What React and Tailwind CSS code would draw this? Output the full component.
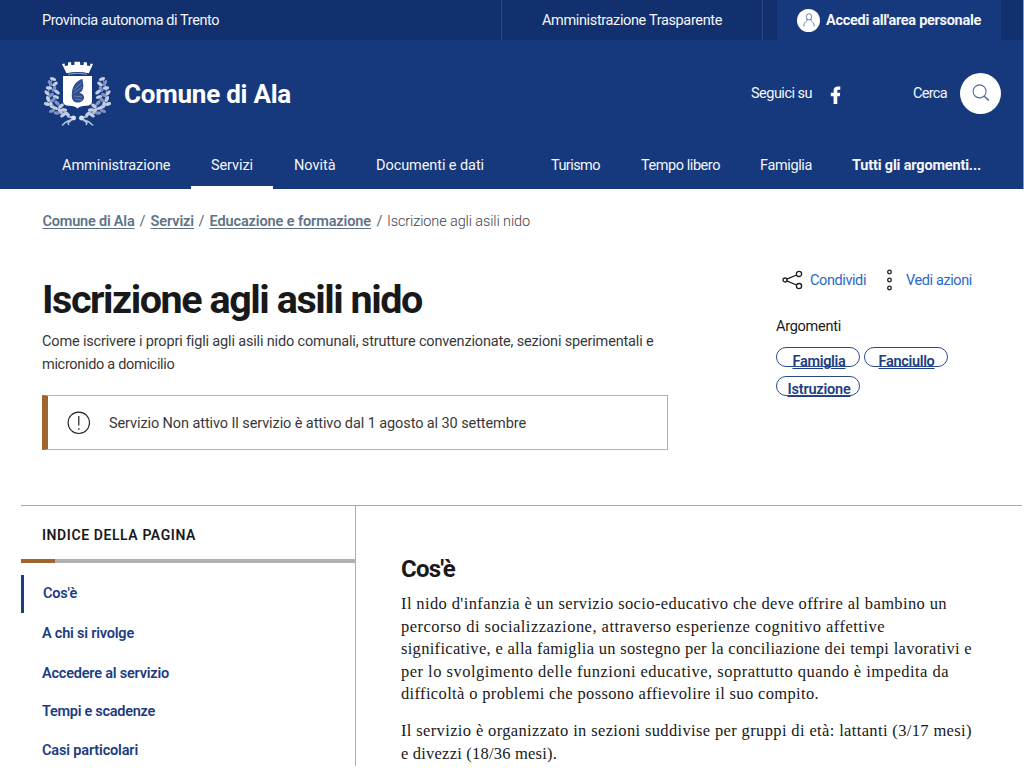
import React from "react";

const LEAVES = [
  [23, 28, 20], [20, 32, 60], [25, 33, -40], [19, 37, 10], [24, 38, -60], [27, 41, 40],
  [17, 42, 50], [21, 44, -30], [26, 46, 20], [18, 48, 70], [23, 49, -50], [17, 53, 15],
  [21, 54, 80], [27, 52, 45], [31, 55, -35], [25, 57, 20], [22, 60, -20], [30, 60, 60],
  [34, 59, 10], [27, 62, 0], [33, 64, -40], [37, 63, 35],
];

function Branch() {
  return (
    <g>
      <path d="M22 29 C14 45 20 59 45 67" fill="none" stroke="#b9c5e0" strokeWidth="0.8" />
      {LEAVES.map(([x, y, a], i) => (
        <ellipse key={i} cx={x} cy={y} rx="3.2" ry="1.7" transform={`rotate(${a} ${x} ${y})`} fill={i % 3 === 1 ? "#7f94c3" : "#c3cee4"} />
      ))}
      <path d="M46 67.5 L37 65.5 M44 67.5 L36 71 L32 74.5 M43 68 L38 72 L39 74" fill="none" stroke="#b5c2de" strokeWidth="1.5" />
    </g>
  );
}

function Crest() {
  return (
    <svg className="h-[85px] w-[100px] shrink-0" viewBox="0 0 100 85">
      <Branch />
      <g transform="translate(95 0) scale(-1 1)"><Branch /></g>
      <circle cx="43.5" cy="67" r="2.4" fill="#d9e0ef" />
      <circle cx="51.5" cy="67" r="2.4" fill="#d9e0ef" />
      <path d="M32 13 L34.5 12.6 L35 15 L38 14.5 L38 11.5 L41 11 L41.3 14 L44.3 14 L44.5 10.7 L50 10.7 L50.3 14 L53.5 14 L53.8 11 L57 11.5 L57 14.5 L60 15 L60.5 12.6 L63 13 L58.8 22.3 Q47.5 19.8 36.5 22.3 Z" fill="#fff" />
      <path d="M38 23.2 Q47.5 21.4 57 23.2" fill="none" stroke="#b6c2de" strokeWidth="0.8" />
      <path d="M33 25 H62 V50.5 Q62 54.5 56 54.8 Q50 55 47.5 57.5 Q45 55 39 54.8 Q33 54.5 33 50.5 Z" fill="#fff" />
      <path d="M52.5 28 C47 29 42 35 42 42 C41 47 43 51.5 47 51.5 C51 52 54.5 49 54 46 C54 43 50.5 42.5 49.5 41.5 C52 41 53.5 38 53.3 34 Z" fill="#304f90" />
      <path d="M44 39 L51 32 M44 42 L52 36 M44 45 L52 46 M45 48 L52 49" stroke="#8296c2" strokeWidth="0.7" />
    </svg>
  );
}

function UserIcon() {
  return (
    <span className="flex h-[23px] w-[23px] items-center justify-center rounded-full bg-white">
      <svg className="h-4 w-4" viewBox="0 0 16 16" fill="none" stroke="#5f77ad" strokeWidth="0.9">
        <ellipse cx="8" cy="4.8" rx="2.6" ry="3.2" />
        <path d="M5.8 7 C6 9 5.6 9.2 4.6 9.9 C3.4 10.8 2.9 12.4 2.7 14.4 M10.2 7 C10 9 10.4 9.2 11.4 9.9 C12.6 10.8 13.1 12.4 13.3 14.4" />
      </svg>
    </span>
  );
}

function NavItem({ children, className }) {
  return <a className={`block whitespace-nowrap ${className}`}>{children}</a>;
}

function Header() {
  return (
    <header className="h-[189px] border-r border-[#8b9bbd] bg-[#16387c] text-[14.5px] text-[#f4f6fa]">
      <div className="flex h-10 items-center bg-[#12306d] pl-[42px]">
        <span className="w-[459px] whitespace-nowrap pt-[2px] tracking-[-0.427px]">Provincia autonoma di Trento</span>
        <span className="flex h-10 w-[262px] items-center whitespace-nowrap border-x border-[#2b4680] pl-10 pt-[2px] tracking-[-0.362px]">Amministrazione Trasparente</span>
        <a className="ml-[14px] flex h-10 w-[224px] items-center gap-[6px] bg-[#16387c] pl-5">
          <UserIcon />
          <span className="whitespace-nowrap pt-[2px] font-bold tracking-[-0.293px]">Accedi all'area personale</span>
        </a>
      </div>
      <div className="flex h-[106px] items-center pl-[30px]">
        <Crest />
        <span className="-ml-[6px] w-[627px] whitespace-nowrap pt-[2px] text-[26px] font-bold tracking-[-0.238px] text-white">Comune di Ala</span>
        <span className="w-[79px] whitespace-nowrap pt-[2px] tracking-[-0.516px]">Seguici su</span>
        <svg className="mt-1 h-[18px] w-[12px]" viewBox="0 0 12 18" fill="#fff">
          <path d="M3.6 18 V10.2 H.8 V6.7 H3.6 V4.6 C3.6 1.8 5.2 .4 7.9 .4 H10.3 V3.7 H8.7 C7.7 3.7 7.3 4.1 7.3 5 V6.7 H10.2 L9.8 10.2 H7.3 V18 Z" />
        </svg>
        <span className="ml-[71px] w-[47px] whitespace-nowrap pt-[2px] tracking-[-0.678px]">Cerca</span>
        <span className="flex h-[41px] w-[41px] items-center justify-center rounded-full bg-white">
          <svg className="h-[18px] w-[18px]" viewBox="0 0 18 18" fill="none" stroke="#536ca5">
            <circle cx="7.6" cy="7.4" r="6.5" strokeWidth="1.1" />
            <path d="M12.2 12.2 L16.8 16.4" strokeWidth="1.5" />
          </svg>
        </span>
      </div>
      <nav className="flex h-[43px] items-stretch leading-[39px]">
        <NavItem className="ml-[62px] w-[129px] tracking-[-0.059px]">Amministrazione</NavItem>
        <NavItem className="w-[82px] border-b-[3px] border-white pl-5 tracking-[-0.087px]">Servizi</NavItem>
        <NavItem className="ml-[21px] w-[82px] tracking-[-0.031px]">Novità</NavItem>
        <NavItem className="w-[175px] tracking-[-0.08px]">Documenti e dati</NavItem>
        <NavItem className="w-[90px] tracking-[-0.556px]">Turismo</NavItem>
        <NavItem className="w-[119px] tracking-[-0.441px]">Tempo libero</NavItem>
        <NavItem className="w-[92px] tracking-[-0.373px]">Famiglia</NavItem>
        <NavItem className="font-bold tracking-[-0.168px]">Tutti gli argomenti...</NavItem>
      </nav>
    </header>
  );
}

function Breadcrumb() {
  return (
    <div className="flex h-[64px] items-center whitespace-nowrap pl-[42.5px] pt-[2px] text-[14.5px] text-[#5f7386]">
      <a className="w-[97px] font-semibold tracking-[-0.204px]"><span className="underline underline-offset-2">Comune di Ala</span></a>
      <span className="w-[11px] text-[#5c6670]">/</span>
      <a className="w-[48px] font-semibold tracking-[-0.092px]"><span className="underline underline-offset-2">Servizi</span></a>
      <span className="w-[11px] text-[#5c6670]">/</span>
      <a className="w-[167px] font-semibold tracking-[-0.111px]"><span className="underline underline-offset-2">Educazione e formazione</span></a>
      <span className="w-[10.5px] text-[#5c6670]">/</span>
      <span className="font-light tracking-[-0.115px] text-[#3f4347]">Iscrizione agli asili nido</span>
    </div>
  );
}

function Intro() {
  return (
    <section className="h-[252px] w-[626px]">
      <h1 className="mt-[22px] whitespace-nowrap text-[39.5px] font-bold leading-[50px] tracking-[-1.45px] text-[#19191a]">Iscrizione agli asili nido</h1>
      <p className="mt-[6px] whitespace-nowrap text-[14.5px] leading-[22.5px] text-[#37383a]">
        <span className="block tracking-[-0.164px]">Come iscrivere i propri figli agli asili nido comunali, strutture convenzionate, sezioni sperimentali e</span>
        <span className="block tracking-[-0.313px]">micronido a domicilio</span>
      </p>
      <div className="mt-[19px] flex h-[55px] items-center border border-l-[6px] border-[#b1b1b3] border-l-[#a0642f] pl-[19px]">
        <svg className="h-[24px] w-[24px]" viewBox="0 0 24 24" fill="none" stroke="#222" strokeWidth="1.1">
          <circle cx="11.8" cy="11.8" r="10.7" />
          <path d="M11.8 5 V14.6" strokeWidth="1.2" />
          <path d="M11.8 17.2 V18.7" strokeWidth="1.4" />
        </svg>
        <span className="ml-[18px] whitespace-nowrap pt-[2px] text-[14.5px] tracking-[-0.095px] text-[#37383a]">Servizio Non attivo Il servizio è attivo dal 1 agosto al 30 settembre</span>
      </div>
    </section>
  );
}

function Chip({ children, className }) {
  return <a className={`h-[20.5px] w-[84px] whitespace-nowrap rounded-[11px] border border-[#2a4a8e] text-[14.5px] font-semibold text-[#1c3d82] underline underline-offset-2 ${className}`}>{children}</a>;
}

function Actions() {
  return (
    <aside className="ml-[108px] w-[210px] pt-[17px]">
      <div className="flex h-5 items-center whitespace-nowrap text-[14.5px] text-[#2b66cc]">
        <svg className="ml-[6px] h-[20px] w-[21px]" viewBox="0 0 21 20" fill="none" stroke="#1f1f21" strokeWidth="1.3">
          <circle cx="3" cy="10" r="2" />
          <circle cx="17" cy="3.9" r="2.6" />
          <circle cx="17" cy="16.1" r="2.6" />
          <path d="M4.8 9.2 L14.5 5 M4.8 10.8 L14.5 15" />
        </svg>
        <span className="ml-[7px] w-[75px] pt-[2px] tracking-[-0.408px]">Condividi</span>
        <svg className="h-[22px] w-[8px]" viewBox="0 0 8 22" fill="none" stroke="#1f1f21" strokeWidth="1.3">
          <circle cx="4.5" cy="3" r="1.8" /><circle cx="4.5" cy="11" r="1.8" /><circle cx="4.5" cy="19" r="1.8" />
        </svg>
        <span className="ml-[13px] pt-[2px] tracking-[-0.393px]">Vedi azioni</span>
      </div>
      <p className="mt-[27px] text-[14.5px] leading-5 tracking-[-0.26px] text-[#19191a]">Argomenti</p>
      <div className="mt-[9.5px] flex flex-wrap gap-x-[4px] gap-y-[8.5px]">
        <Chip className="pl-[15.5px] leading-[27px] tracking-[-0.307px]">Famiglia</Chip>
        <Chip className="pl-[13.5px] leading-[27px] tracking-[-0.309px]">Fanciullo</Chip>
        <Chip className="pl-[10.5px] leading-[25px] tracking-[-0.203px]">Istruzione</Chip>
      </div>
    </aside>
  );
}

function PageIndex() {
  return (
    <aside className="w-[335px] border-r border-[#b1b1b3] text-[14.5px] font-semibold text-[#1c3d82]">
      <h2 className="h-[53px] pl-[21px] text-[14px] leading-[58px] tracking-[0.59px] text-[#19191a]">INDICE DELLA PAGINA</h2>
      <div className="h-1 bg-[#b1b1b3]"><div className="h-full w-[34px] bg-[#a0642f]" /></div>
      <ul className="mt-3">
        <li className="h-[38px] border-l-[3px] border-[#1c3d82] pl-[19px] leading-[38px] tracking-[-0.181px]">Cos'è</li>
        <li className="h-[39.5px] pl-[21px] leading-[41px] tracking-[-0.207px]">A chi si rivolge</li>
        <li className="h-[39px] pl-[21px] leading-[41px] tracking-[-0.209px]">Accedere al servizio</li>
        <li className="h-[39px] pl-[21px] leading-[40px] tracking-[-0.28px]">Tempi e scadenze</li>
        <li className="h-[39px] pl-[21px] leading-[40px] tracking-[-0.16px]">Casi particolari</li>
      </ul>
    </aside>
  );
}

function Content() {
  return (
    <article className="flex-1 pl-[45px] pt-[46px] text-[#19191a]">
      <h2 className="text-2xl font-bold leading-[34px] tracking-[-0.744px]">Cos'è</h2>
      <div className="mt-[7px] whitespace-nowrap font-['Liberation_Serif',serif] text-[16.5px] leading-[22.5px]">
        <p>
          <span className="block tracking-[0.382px]">Il nido d'infanzia è un servizio socio-educativo che deve offrire al bambino un</span>
          <span className="block tracking-[0.472px]">percorso di socializzazione, attraverso esperienze cognitivo affettive</span>
          <span className="block tracking-[0.305px]">significative, e alla famiglia un sostegno per la conciliazione dei tempi lavorativi e</span>
          <span className="block tracking-[0.482px]">per lo svolgimento delle funzioni educative, soprattutto quando è impedita da</span>
          <span className="block tracking-[0.349px]">difficoltà o problemi che possono affievolire il suo compito.</span>
        </p>
        <p className="mt-[14.5px]">
          <span className="block tracking-[0.36px]">Il servizio è organizzato in sezioni suddivise per gruppi di età: lattanti (3/17 mesi)</span>
          <span className="block tracking-[0.21px]">e divezzi (18/36 mesi).</span>
        </p>
      </div>
    </article>
  );
}

export default function App() {
  return (
    <div className="h-[768px] w-[1024px] overflow-hidden bg-white font-[Roboto,sans-serif]">
      <Header />
      <Breadcrumb />
      <div className="flex h-[252px] pl-[42px]">
        <Intro />
        <Actions />
      </div>
      <div className="ml-[21px] flex h-[261px] w-[1001px] border-t border-[#a9a9ab]">
        <PageIndex />
        <Content />
      </div>
    </div>
  );
}
